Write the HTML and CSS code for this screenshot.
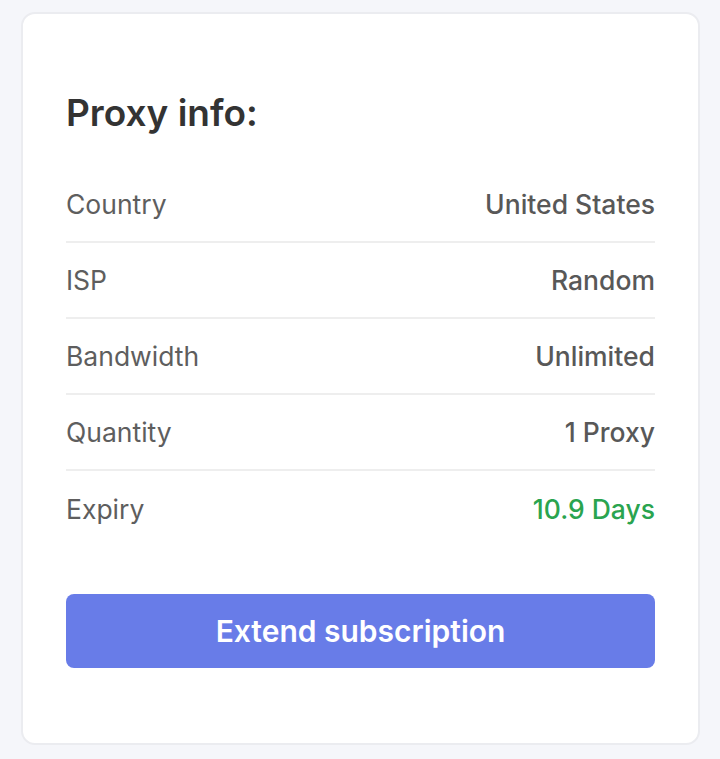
FILE: index.html
```html
<!DOCTYPE html>
<html lang="en">
<head>
    <meta charset="UTF-8" />
    <title>Proxy info</title>
    <link rel="stylesheet" href="styles.css">
</head>
<body>
    <div class="card">
        <h2>Proxy info:</h2>

        <div class="rows">
            <div class="row"><span class="label">Country</span><span class="value">United States</span></div>
            <div class="row"><span class="label">ISP</span><span class="value">Random</span></div>
            <div class="row"><span class="label">Bandwidth</span><span class="value">Unlimited</span></div>
            <div class="row"><span class="label">Quantity</span><span class="value">1 Proxy</span></div>
            <div class="row"><span class="label">Expiry</span><span class="value value-green">10.9 Days</span></div>
        </div>

        <button class="extend-btn">Extend subscription</button>
    </div>
</body>
</html>
```

FILE: styles.css
```css
* {
    box-sizing: border-box;
}

body {
    font-family: Inter, 'Noto Sans', sans-serif;
    background: #f5f6fa;
    margin: 0;
    padding: 12px 20px 14px 21px;
}

.card {
    background: #ffffff;
    border: 2px solid #ebecf0;
    border-radius: 14px;
    padding: 77px 43px 75px;
    height: 733px;
}

.card h2 {
    margin: 0 0 32px;
    font-size: 37px;
    line-height: 44px;
    font-weight: 600;
    color: #333333;
}

.row {
    display: flex;
    justify-content: space-between;
    align-items: center;
    height: 76px;
    border-bottom: 2px solid #eeeeee;
    font-size: 26.5px;
}

    .row:last-child {
        border-bottom: none;
    }

.label {
    color: #5e5e5e;
}

.value {
    color: #585858;
    font-weight: 550;
}

.value-green {
    color: #2aa44f;
}

.extend-btn {
    display: block;
    width: 100%;
    height: 74px;
    margin-top: 47px;
    border: none;
    border-radius: 8px;
    background-color: #687ce8;
    color: #ffffff;
    font-family: inherit;
    font-size: 30px;
    font-weight: 600;
    cursor: pointer;
}
```
